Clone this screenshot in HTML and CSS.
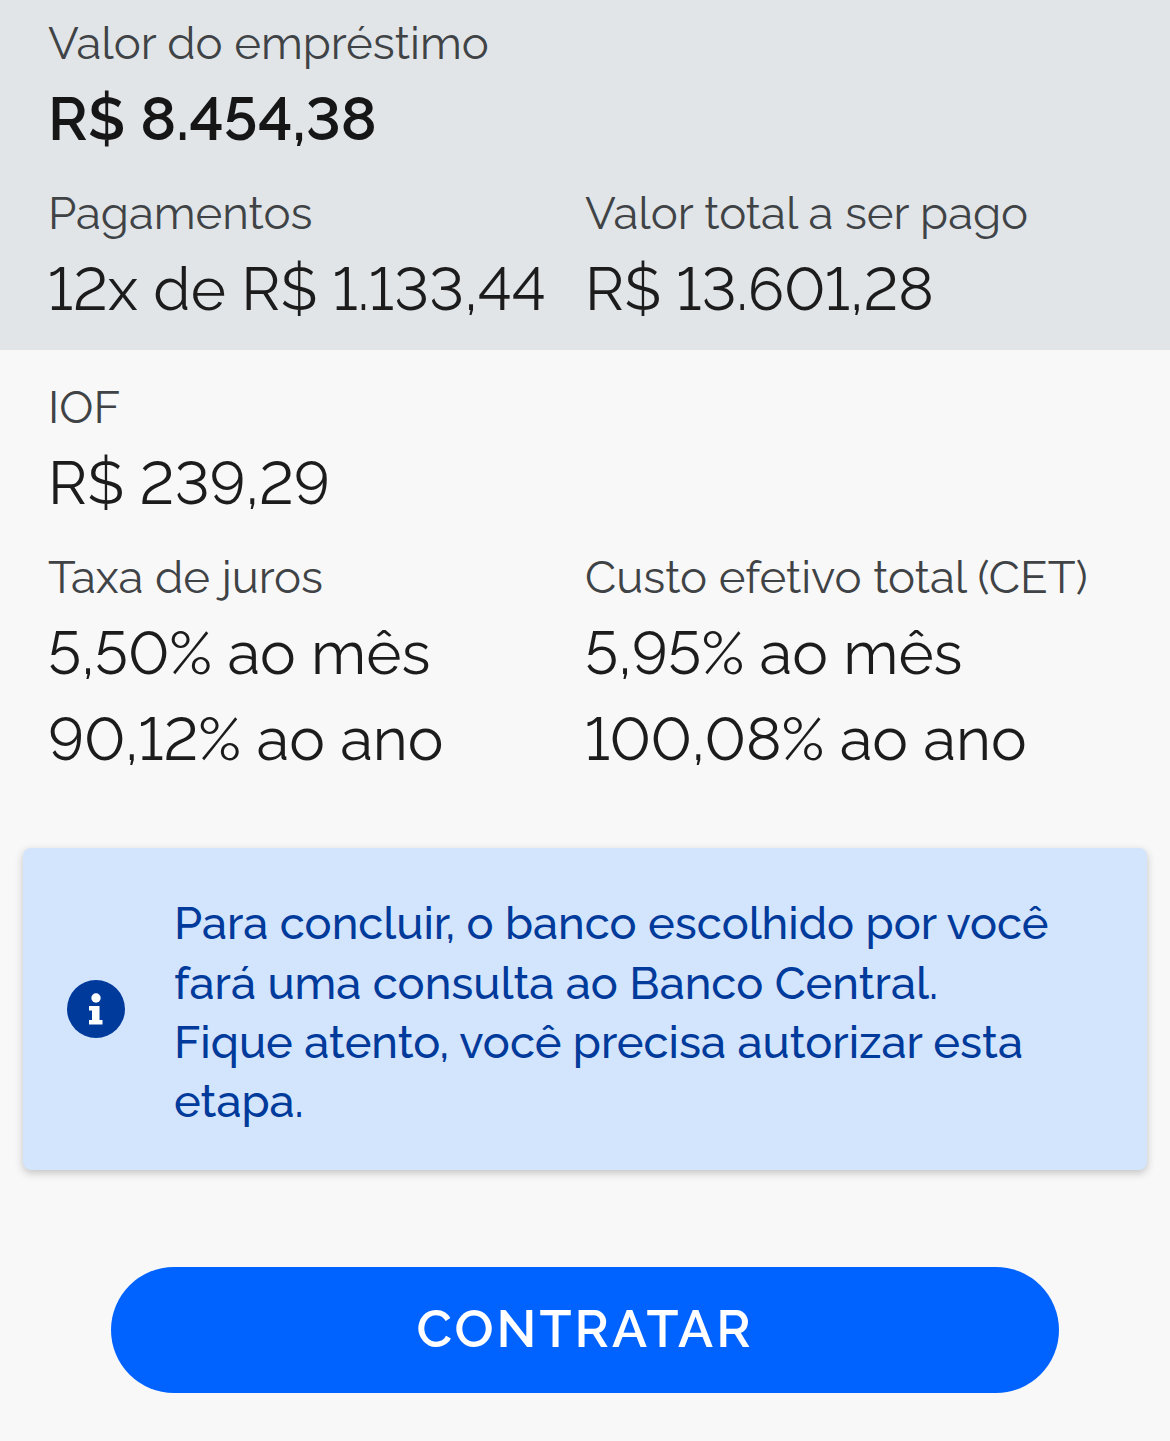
FILE: index.html
```html
<!DOCTYPE html>
<html lang="pt-BR">
<head>
<meta charset="utf-8">
<title>Contratar</title>
<link rel="stylesheet" href="styles.css">
</head>
<body>
<section class="summary">
  <div class="label">Valor do empréstimo</div>
  <div class="value strong">R$ 8.454,38</div>
  <div class="cols">
    <div>
      <div class="label">Pagamentos</div>
      <div class="value">12x de R$ 1.133,44</div>
    </div>
    <div>
      <div class="label">Valor total a ser pago</div>
      <div class="value">R$ 13.601,28</div>
    </div>
  </div>
</section>
<section class="details">
  <div class="label">IOF</div>
  <div class="value">R$ 239,29</div>
  <div class="cols">
    <div>
      <div class="label">Taxa de juros</div>
      <div class="value">5,50% ao mês</div>
      <div class="value second">90,12% ao ano</div>
    </div>
    <div>
      <div class="label">Custo efetivo total (CET)</div>
      <div class="value">5,95% ao mês</div>
      <div class="value second">100,08% ao ano</div>
    </div>
  </div>
</section>
<aside class="notice">
  <svg class="notice-icon" viewBox="0 0 58 58" width="58" height="58" aria-hidden="true">
    <circle cx="29" cy="29" r="29" fill="#003a9b"/>
    <circle cx="29" cy="18" r="4.700" fill="#fff"/>
    <path d="M22 26h10.500v14h3v4.500h-13.500v-4.500h3v-9.500h-3z" fill="#fff"/>
  </svg>
  <p class="notice-text">Para concluir, o banco escolhido por você fará uma consulta ao Banco Central.<br>Fique atento, você precisa autorizar esta etapa.</p>
</aside>
<div class="action"><button class="cta">CONTRATAR</button></div>
</body>
</html>
```
FILE: styles.css
```css
* { box-sizing: border-box; }
html, body { margin: 0; padding: 0; }
body {
  width: 1170px;
  height: 1441px;
  overflow: hidden;
  background: #f8f8f8;
  font-family: Raleway, "Open Sans", "Noto Sans", sans-serif;
  font-variant-numeric: lining-nums;
  color: #212121;
}
.summary {
  background: #e1e5e8;
  height: 350px;
  padding: 14px 48px 0;
}
.details { padding: 28px 48px 0; height: 498px; }
.label {
  font-size: 45.500px;
  font-weight: 400;
  line-height: 59px;
  color: #404346;
}
.value {
  font-size: 60px;
  font-weight: 400;
  line-height: 86px;
  margin-top: 3px;
  color: #1c1c1c;
}
.strong { font-weight: 600; color: #161616; }
.second { margin-top: 0; }
.cols { display: grid; grid-template-columns: 537px 1fr; margin-top: 22px; }
.notice {
  margin: 0 23px;
  height: 322px;
  background: #d3e4fd;
  border-radius: 8px;
  box-shadow: 0 3px 8px rgba(0,0,0,.22);
  display: flex;
  align-items: center;
  padding: 8px 44px 0;
  gap: 49px;
  color: #003a9b;
}
.notice-icon { flex: none; margin-top: -8px; }
.notice-text { margin: 0; font-size: 45.200px; font-weight: 500; line-height: 59.3px; }
.action { padding-top: 97px; display: flex; justify-content: center; }
.cta {
  width: 948px;
  height: 126px;
  border: 0;
  border-radius: 63px;
  padding: 0 0 4px;
  background: #0062ff;
  color: #fff;
  font: 600 52px Raleway, sans-serif;
  letter-spacing: 3px;
}
```
